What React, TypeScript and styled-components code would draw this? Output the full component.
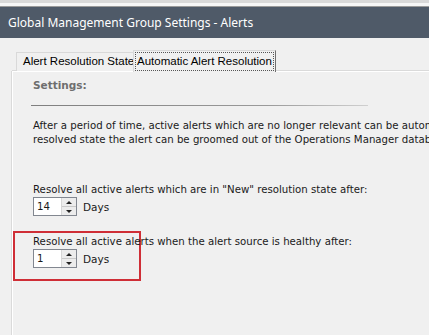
import React from 'react'
import styled, {createGlobalStyle} from 'styled-components'

const GlobalStyle = createGlobalStyle`
  html, body {
    margin: 0;
    padding: 0;
    background: #f0f0f0;
    overflow: hidden;
  }
`

const Window = styled.div`
  width: 429px;
  height: 335px;
  display: flex;
  flex-direction: column;
  background: #f0f0f0;
  overflow: hidden;
`

const TopStrip = styled.div`
  height: 7px;
  background: linear-gradient(#d9d9d9 0, #d9d9d9 3px, #f6f6f6 3px, #f6f6f6 6px, #9a9a9a 6px);
`

const TitleBar = styled.div`
  height: 31px;
  background: #4f5a68;
  display: flex;
  align-items: center;
  padding-left: 8px;
  color: #ffffff;
  font-family: "Noto Sans", "Open Sans", sans-serif;
  font-size: 12px;
  white-space: nowrap;
`

const Body = styled.div`
  flex: 1;
  display: flex;
  flex-direction: column;
  padding: 11px 0 0 12px;
`

const TabStrip = styled.div`
  display: flex;
  align-items: flex-end;
  padding-left: 4px;
  height: 22px;
  font-family: "Liberation Sans", Arial, sans-serif;
  font-size: 11.5px;
  color: #000;
`

const Tab = styled.div<{ $active?: boolean }>`
  box-sizing: border-box;
  height: ${(p) => (p.$active ? '22px' : '19px')};
  padding: ${(p) => (p.$active ? '2px 2px 0 2px' : '2px 0 0 6px')};
  border: 1px solid #d9d9d9;
  border-bottom: none;
  border-right: ${(p) => (p.$active ? '1px solid #6f6f6f' : 'none')};
  background: #f0f0f0;
  margin-bottom: ${(p) => (p.$active ? '-1px' : '0')};
  position: relative;
  z-index: ${(p) => (p.$active ? 1 : 0)};
  white-space: nowrap;
  overflow: hidden;
  width: ${(p) => (p.$active ? 'auto' : '117px')};
`

const FocusLabel = styled.span`
  display: block;
  outline: 1px dotted #555;
  outline-offset: 0;
  padding: 1px 1px 2px 1px;
  line-height: 14px;
`

const Panel = styled.div`
  flex: 1;
  border-top: 1px solid #ffffff;
  border-left: 1px solid #ffffff;
  box-shadow: -1px 0 0 #dadada, 0 -1px 0 #dadada;
  padding: 7px 0 0 20px;
  font-family: "DejaVu Sans", Tahoma, sans-serif;
  font-size: 10.2px;
  color: #1a1a1a;
`

const SectionTitle = styled.div`
  font-weight: bold;
  color: #6e6e6e;
  font-size: 10.5px;
  height: 14px;
`

const Separator = styled.div`
  margin: 12px 0 0 -2px;
  width: 337px;
  height: 1px;
  background: linear-gradient(90deg, #7f7f7f, #9a9a9a 70%, #d0d0d0);
`

const Paragraph = styled.p`
  margin: 13px 0 0 0;
  white-space: nowrap;
  line-height: 14px;
`

const Field = styled.div`
  margin-top: 36px;
`

const HighlightField = styled.div`
  box-sizing: border-box;
  margin: 15px 0 0 -20px;
  padding: 2px 0 0 18px;
  width: 128px;
  height: 50px;
  border: 2px solid #cf2e36;
  overflow: visible;
  white-space: nowrap;
`

const FieldLabel = styled.div`
  line-height: 14px;
  white-space: nowrap;
`

const FieldRow = styled.div`
  display: flex;
  align-items: center;
  gap: 6px;
  margin-top: 0;
`

const SpinBox = styled.div`
  box-sizing: border-box;
  width: 44px;
  height: 19px;
  border: 1px solid #828790;
  background: #ffffff;
  display: flex;
  align-items: stretch;
`

const SpinValue = styled.div`
  flex: 1;
  padding-left: 3px;
  display: flex;
  align-items: center;
`

const SpinButtons = styled.div`
  width: 14px;
  display: flex;
  flex-direction: column;
  border-left: 1px solid #d6d6d6;
  background: #ececec;
`

const SpinArrow = styled.div<{ $down?: boolean }>`
  flex: 1;
  display: flex;
  align-items: center;
  justify-content: center;
  border-bottom: ${(p) => (p.$down ? 'none' : '1px solid #c9c9c9')};

  &::after {
    content: '';
    width: 0;
    height: 0;
    border-left: 3px solid transparent;
    border-right: 3px solid transparent;
    ${(p) => (p.$down ? 'border-top: 3px solid #222;' : 'border-bottom: 3px solid #222;')}
  }
`

const Unit = styled.span`
  font-size: 10.5px;
`

const Spinner: React.FC<{ value: string }> = ({value}) => (
    <SpinBox>
        <SpinValue>{value}</SpinValue>
        <SpinButtons>
            <SpinArrow/>
            <SpinArrow $down/>
        </SpinButtons>
    </SpinBox>
)

const App: React.FC = () => {
    return (
        <Window>
            <GlobalStyle/>
            <TopStrip/>
            <TitleBar>Global Management Group Settings - Alerts</TitleBar>
            <Body>
                <TabStrip>
                    <Tab>Alert Resolution States</Tab>
                    <Tab $active><FocusLabel>Automatic Alert Resolution</FocusLabel></Tab>
                </TabStrip>
                <Panel>
                    <SectionTitle>Settings:</SectionTitle>
                    <Separator/>
                    <Paragraph>
                        After a period of time, active alerts which are no longer relevant can be automatically resolved. Once in the
                        <br/>
                        resolved state the alert can be groomed out of the Operations Manager database.
                    </Paragraph>
                    <Field>
                        <FieldLabel>Resolve all active alerts which are in "New" resolution state after:</FieldLabel>
                        <FieldRow>
                            <Spinner value="14"/>
                            <Unit>Days</Unit>
                        </FieldRow>
                    </Field>
                    <HighlightField>
                        <FieldLabel>Resolve all active alerts when the alert source is healthy after:</FieldLabel>
                        <FieldRow>
                            <Spinner value="1"/>
                            <Unit>Days</Unit>
                        </FieldRow>
                    </HighlightField>
                </Panel>
            </Body>
        </Window>
    )
}

export default App
